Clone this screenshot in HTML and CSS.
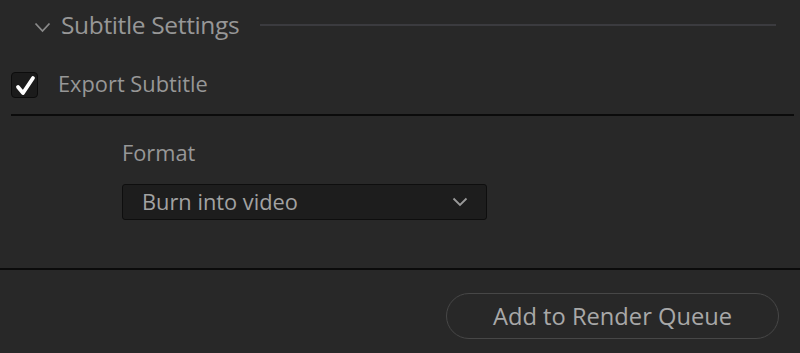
FILE: index.html
```html
<!DOCTYPE html>
<html>
<head>
<meta charset="utf-8">
<link rel="stylesheet" href="styles.css">
</head>
<body>
<div class="panel">
  <div class="section-head">
    <svg class="chev" width="17" height="11" viewBox="0 0 17 11"><path d="M1.5 1.5 L8.5 9 L15.5 1.5" fill="none" stroke="#8a8a8a" stroke-width="1.8"/></svg>
    <span class="title">Subtitle Settings</span>
    <span class="rule"></span>
  </div>
  <div class="check-row">
    <span class="checkbox">
      <svg width="22" height="22" viewBox="0 0 22 22"><path d="M4 13 L9 19 L19 4" fill="none" stroke="#ffffff" stroke-width="3.8" stroke-linecap="round" stroke-linejoin="round"/></svg>
    </span>
    <span class="check-label">Export Subtitle</span>
  </div>
  <div class="divider inset"></div>
  <div class="format">
    <div class="format-label">Format</div>
    <div class="select">
      <span class="select-text">Burn into video</span>
      <svg width="16" height="10" viewBox="0 0 16 10"><path d="M1.5 1.5 L8 8 L14.5 1.5" fill="none" stroke="#9a9a9a" stroke-width="1.8"/></svg>
    </div>
  </div>
  <div class="divider full"></div>
  <div class="actions">
    <button class="queue-btn">Add to Render Queue</button>
  </div>
</div>
</body>
</html>
```
FILE: styles.css
```css
html, body {
  margin: 0;
  padding: 0;
  background: #282828;
  width: 800px;
  height: 353px;
  overflow: hidden;
}
.panel {
  font-family: "Open Sans", "Noto Sans", sans-serif;
  color: #979797;
  display: flex;
  flex-direction: column;
}
.section-head {
  height: 50px;
  display: flex;
  align-items: flex-start;
  padding-left: 34px;
  padding-right: 24px;
  box-sizing: border-box;
}
.chev {
  margin-top: 22px;
}
.title {
  margin-left: 10px;
  margin-top: 10px;
  font-size: 24.5px;
  line-height: 30px;
  letter-spacing: -0.35px;
  color: #979797;
}
.rule {
  flex: 1;
  height: 2px;
  background: #3b3b3f;
  margin-left: 21px;
  margin-top: 24px;
}
.check-row {
  display: flex;
  align-items: center;
  height: 26px;
  margin-top: 22px;
  padding-left: 11px;
}
.checkbox {
  width: 27px;
  height: 26px;
  box-sizing: border-box;
  background: #1b1b1b;
  border: 1px solid #0c0c0c;
  border-radius: 4px;
  display: flex;
  align-items: center;
  justify-content: center;
}
.check-label {
  margin-left: 20px;
  font-size: 21.8px;
  line-height: 26px;
  margin-bottom: 2px;
  color: #979797;
}
.divider {
  height: 2px;
  background: #0b0b0b;
}
.divider.inset {
  margin: 16px 6px 0 11px;
}
.format {
  padding-left: 122px;
  padding-top: 24px;
}
.format-label {
  font-size: 21.8px;
  line-height: 26px;
  color: #979797;
}
.select {
  margin-top: 18px;
  width: 365px;
  height: 36px;
  box-sizing: border-box;
  background: #1d1d1d;
  border: 1px solid #0e0e0e;
  border-radius: 3px;
  display: flex;
  align-items: center;
  justify-content: space-between;
  padding: 0 18px 0 19px;
}
.select-text {
  font-size: 21.8px;
  line-height: 26px;
  color: #a2a2a2;
}
.divider.full {
  margin-top: 48px;
}
.actions {
  display: flex;
  justify-content: flex-end;
  padding-right: 21px;
  padding-top: 23px;
}
.queue-btn {
  width: 333px;
  height: 46px;
  border-radius: 23px;
  border: 1px solid #474747;
  background: #282828;
  font-family: "Open Sans", "Noto Sans", sans-serif;
  font-size: 23.7px;
  color: #a8a8a8;
  padding: 0;
}
```
